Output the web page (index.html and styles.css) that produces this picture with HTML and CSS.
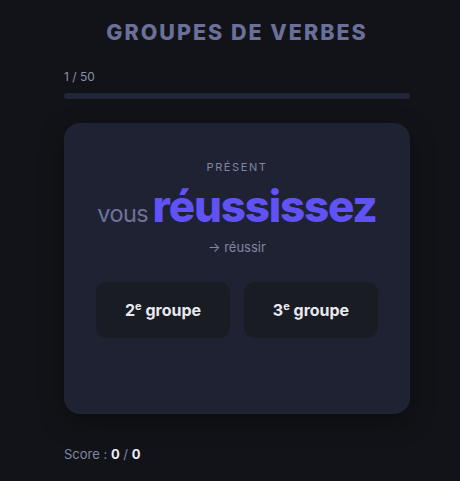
FILE: index.html
```html
<!DOCTYPE html>
<html lang="fr">
<head>
<meta charset="utf-8">
<link rel="stylesheet" href="styles.css">
</head>
<body>
<main class="app">
  <h1 class="title">GROUPES DE VERBES</h1>
  <div class="progress-label">1 / 50</div>
  <div class="progress"><div class="progress-fill"></div></div>
  <section class="card">
    <div class="tense">PRÉSENT</div>
    <div class="verb"><span class="pronoun">vous</span> <span class="form">réussissez</span></div>
    <div class="infinitive">→ réussir</div>
    <div class="choices">
      <button class="choice">2<sup>e</sup> groupe</button>
      <button class="choice">3<sup>e</sup> groupe</button>
    </div>
  </section>
  <div class="score">Score : <b>0</b> / <b>0</b></div>
</main>
</body>
</html>
```
FILE: styles.css
```css
html, body {
  margin: 0;
  padding: 0;
  background: #121318;
  font-family: Inter, "Noto Sans", sans-serif;
}
.app {
  width: 346px;
  margin-left: 64px;
  padding-top: 19px;
}
.title {
  margin: 0;
  text-align: center;
  font-size: 21.5px;
  font-weight: 800;
  letter-spacing: 2px;
  color: #6a7099;
  line-height: 26px;
}
.progress-label {
  margin-top: 24px;
  font-size: 12px;
  color: #8a8fa8;
  line-height: 16px;
}
.progress {
  margin-top: 8px;
  height: 6px;
  border-radius: 3px;
  background: #23263a;
}
.progress-fill {
  width: 0;
  height: 100%;
}
.card {
  margin-top: 24px;
  height: 291px;
  box-sizing: border-box;
  padding: 37px 32px 0;
  background: #1f2233;
  border-radius: 16px;
  box-shadow: 0 8px 24px rgba(0,0,0,0.35);
  text-align: center;
}
.tense {
  font-size: 11px;
  letter-spacing: 1.6px;
  color: #8087a2;
  line-height: 14px;
}
.verb {
  margin-top: 9px;
  line-height: 46px;
  white-space: nowrap;
}
.pronoun {
  font-size: 23.5px;
  color: #6e7399;
  letter-spacing: -0.6px;
}
.form {
  font-size: 44px;
  font-weight: 800;
  color: #6152f5;
  letter-spacing: -1.2px;
}
.infinitive {
  margin-top: -1px;
  font-size: 13px;
  color: #8087a2;
  line-height: 18px;
}
.choices {
  margin-top: 26px;
  display: flex;
  gap: 14px;
}
.choice {
  flex: 1;
  height: 56px;
  border: none;
  border-radius: 11px;
  background: #1a1c24;
  color: #e8e9f0;
  font-family: inherit;
  font-size: 16px;
  font-weight: 700;
  padding: 0;
}
.choice sup {
  font-size: 11px;
  line-height: 0;
  vertical-align: 6px;
}
.score {
  margin-top: 31px;
  font-size: 13px;
  color: #8087a2;
  line-height: 18px;
}
.score b {
  color: #ecedf3;
  font-weight: 700;
}
```
